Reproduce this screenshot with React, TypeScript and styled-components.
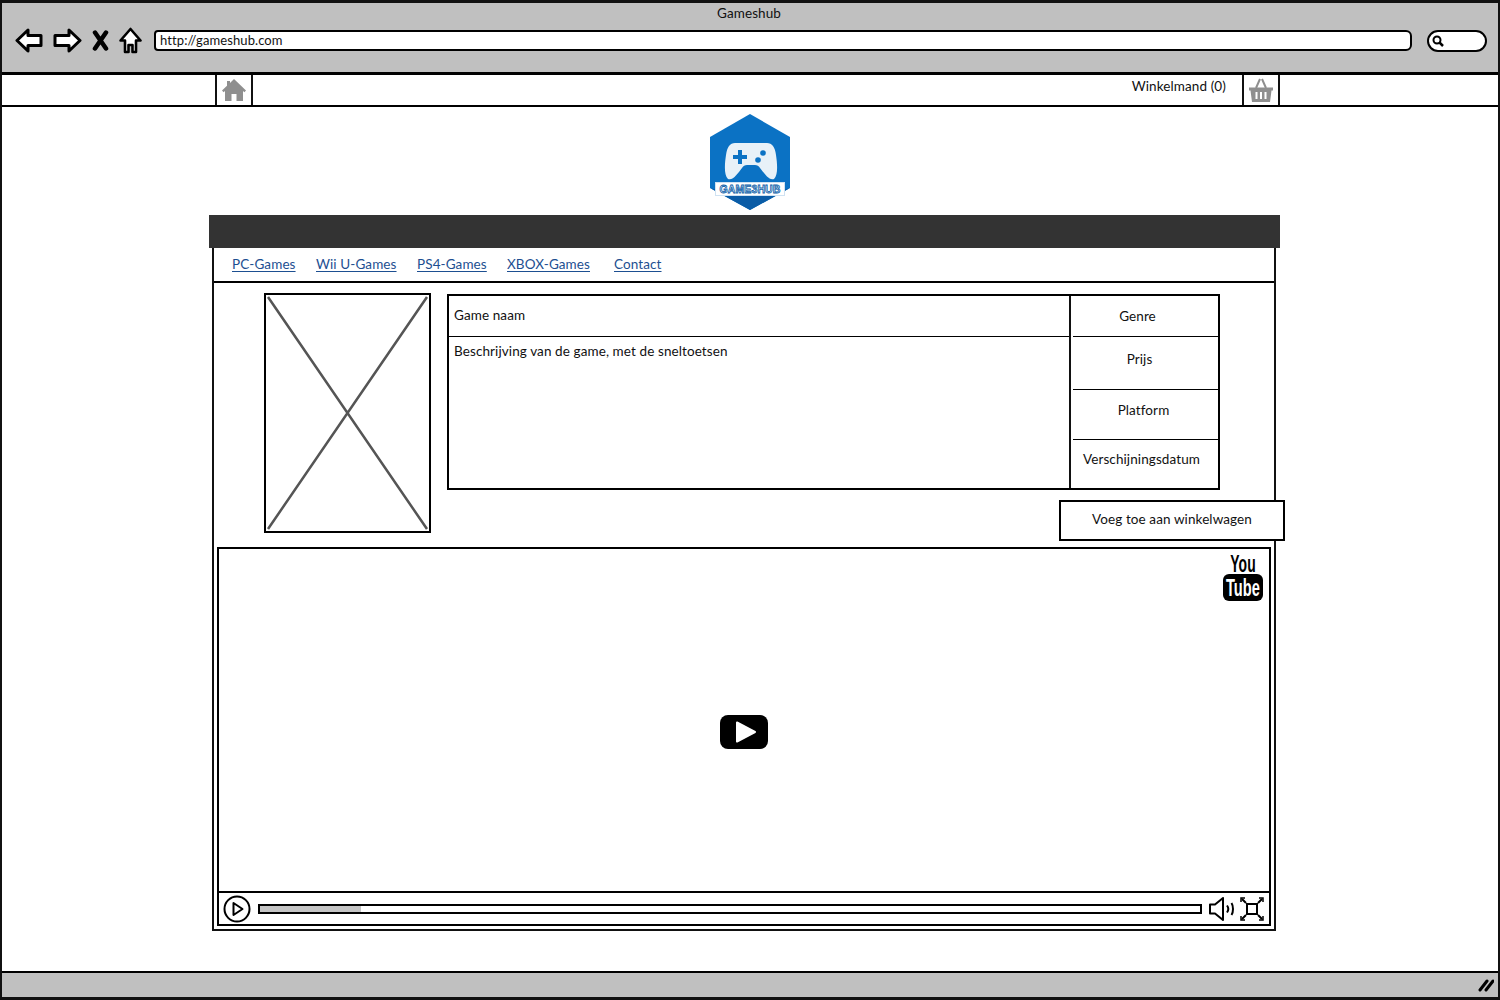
import styled, { createGlobalStyle } from "styled-components";

const GlobalStyle = createGlobalStyle`
  html, body {
    margin: 0;
    padding: 0;
    background: #fff;
  }
  body {
    font-family: Lato, "Open Sans", sans-serif;
    font-size: 13.5px;
    letter-spacing: 0.1px;
    color: #111;
  }
`;

const navLinks = ["PC-Games", "Wii U-Games", "PS4-Games", "XBOX-Games", "Contact"];

const specs = [
  { label: "Genre", shift: -8, top: 12 },
  { label: "Prijs", shift: -6, top: 14 },
  { label: "Platform", shift: -2, top: 12 },
  { label: "Verschijningsdatum", shift: -4, top: 11 },
];

const BackIcon = () => (
  <ToolIcon width="28" height="25" viewBox="0 0 28 25">
    <path d="M2 12.5 13 2v5.5h13v10H13V23z" fill="#fff" stroke="#000" strokeWidth="3" strokeLinejoin="round" />
  </ToolIcon>
);

const ForwardIcon = () => (
  <ToolIcon width="29" height="25" viewBox="0 0 29 25">
    <path d="M27 12.5 16 2v5.5H2v10h14V23z" fill="#fff" stroke="#000" strokeWidth="3" strokeLinejoin="round" />
  </ToolIcon>
);

const CloseIcon = () => (
  <ToolIcon width="17" height="21" viewBox="0 0 17 21">
    <path d="M3 2.5 14 18.5M14 2.5 3 18.5" fill="none" stroke="#000" strokeWidth="4.5" strokeLinecap="round" />
  </ToolIcon>
);

const HomeOutlineIcon = () => (
  <ToolIcon width="23" height="27" viewBox="0 0 23 27">
    <path d="M11.5 2 21.5 13.5H17V25H13.5V18H9.5V25H6V13.5H1.5z" fill="#fff" stroke="#000" strokeWidth="2.6" strokeLinejoin="round" />
  </ToolIcon>
);

const HomeSolidIcon = () => (
  <svg width="26" height="24" viewBox="0 0 26 24">
    <path d="M13 1 25 12.5l-1.6 1.7L22 13v10h-6.5v-7h-5v7H4V13l-1.4 1.2L1 12.5 6 7.700V3h3v2z" fill="#8f8f8f" />
  </svg>
);

const BasketIcon = () => (
  <svg width="24" height="26" viewBox="0 0 24 26">
    <path d="M7 11 11 2M17 11 13 2" fill="none" stroke="#8f8f8f" strokeWidth="2" />
    <path d="M0 10.500h24v3h-1.500L21 25H3L1.500 13.500H0z" fill="#8f8f8f" />
    <path d="M7.500 15v7M12 15v7M16.500 15v7" fill="none" stroke="#fff" strokeWidth="2" />
  </svg>
);

const Logo = () => (
  <svg width="82" height="97" viewBox="0 0 82 97">
    <path d="M41 1 81 24V75L41 97 1 75V24z" fill="#0b72c4" />
    <path d="M9 80H73V77L81 75 41 97 1 75 9 77z" fill="#0a5ca6" />
    <path
      d="M26 30H58C63 30 66 34 67 42 68.500 52 69 62 65 66 60 68 55 60 51 55 50 53 48 52 46 52H38C36 52 34 53 33 55 29 60 24 68 19 66 15 62 15.500 52 17 42 18 34 21 30 26 30z"
      fill="#e8f1f8"
    />
    <path d="M31 37V51M24 44H38" stroke="#0b72c4" strokeWidth="4" fill="none" />
    <circle cx="49" cy="47" r="2.800" fill="#0b72c4" />
    <circle cx="54" cy="40" r="2.800" fill="#0b72c4" />
    <rect x="6.500" y="69.500" width="69" height="13" fill="#fff" stroke="#cfe2f2" strokeWidth="1" />
    <text
      x="41"
      y="80"
      textAnchor="middle"
      fontFamily="'Liberation Sans', sans-serif"
      fontWeight="700"
      fontSize="10.500"
      fill="#e8f1f8"
      stroke="#0b5ea8"
      strokeWidth="0.800"
    >
      GAME3HUB
    </text>
  </svg>
);

const ImagePlaceholder = () => (
  <PlaceholderBox>
    <svg width="100%" height="100%" viewBox="0 0 162 236" preserveAspectRatio="none">
      <path d="M2 2 160 234M160 2 2 234" stroke="#555" strokeWidth="2.500" fill="none" />
    </svg>
  </PlaceholderBox>
);

const YoutubeBadge = () => (
  <YoutubeMark width="42" height="50" viewBox="0 0 42 50">
    <text
      textAnchor="middle"
      fontFamily="'Liberation Sans', sans-serif"
      fontWeight="700"
      fontSize="24"
      fill="#000"
      transform="translate(21 21) scale(0.58 1)"
    >
      You
    </text>
    <rect x="1" y="23" width="40" height="27" rx="6" fill="#000" />
    <text
      textAnchor="middle"
      fontFamily="'Liberation Sans', sans-serif"
      fontWeight="700"
      fontSize="24"
      fill="#fff"
      transform="translate(21 45) scale(0.61 1)"
    >
      Tube
    </text>
  </YoutubeMark>
);

const BigPlay = () => (
  <svg width="48" height="34" viewBox="0 0 48 34">
    <rect width="48" height="34" rx="8" fill="#000" />
    <path d="M17 7.500 35 17 17 26.500z" fill="#fff" stroke="#fff" strokeWidth="2" strokeLinejoin="round" />
  </svg>
);

const RoundPlay = () => (
  <svg width="28" height="28" viewBox="0 0 28 28">
    <circle cx="14" cy="14" r="12.500" fill="#fff" stroke="#000" strokeWidth="2" />
    <path d="M10.500 8 19.500 14 10.500 20z" fill="#fff" stroke="#000" strokeWidth="2" strokeLinejoin="round" />
  </svg>
);

const VolumeIcon = () => (
  <svg width="28" height="26" viewBox="0 0 28 26">
    <path d="M2 8.500H7L15 2V24L7 17.500H2z" fill="#fff" stroke="#000" strokeWidth="2" strokeLinejoin="round" />
    <path d="M19 9.500c1.500 2 1.500 5 0 7M23.500 7c2 3 2 9 0 12" fill="none" stroke="#000" strokeWidth="2" />
  </svg>
);

const FullscreenIcon = () => (
  <svg width="24" height="24" viewBox="0 0 24 24">
    <rect x="7" y="7" width="10" height="10" fill="#fff" stroke="#000" strokeWidth="2" />
    <path d="M6 6 2 2M18 6 22 2M6 18 2 22M18 18 22 22" stroke="#000" strokeWidth="2" fill="none" />
    <path d="M1 5V1H5M19 1H23V5M1 19V23H5M19 23H23V19" stroke="#000" strokeWidth="1.500" fill="none" />
  </svg>
);

export default function App() {
  return (
    <>
      <GlobalStyle />
      <Window>
        <Chrome>
          <ChromeTitle>Gameshub</ChromeTitle>
          <ChromeRow>
            <BackIcon />
            <ForwardIcon />
            <CloseIcon />
            <HomeOutlineIcon />
            <UrlField>http://gameshub.com</UrlField>
            <SearchPill>
              <svg width="12" height="12" viewBox="0 0 12 12">
                <circle cx="5" cy="5" r="3.500" fill="none" stroke="#000" strokeWidth="2" />
                <path d="M7.500 7.500 11 11" stroke="#000" strokeWidth="2.500" />
              </svg>
            </SearchPill>
          </ChromeRow>
        </Chrome>

        <TopBar>
          <IconTab>
            <HomeSolidIcon />
          </IconTab>
          <CartLabel>Winkelmand (0)</CartLabel>
          <IconTab>
            <BasketIcon />
          </IconTab>
        </TopBar>

        <Main>
          <LogoRow>
            <Logo />
          </LogoRow>
          <DarkBar />
          <Panel>
            <NavRow>
              {navLinks.map((link) => (
                <NavLink key={link} href="#">
                  {link}
                </NavLink>
              ))}
            </NavRow>
            <Details>
              <ImagePlaceholder />
              <DetailColumn>
                <InfoTable>
                  <InfoMain>
                    <GameName>Game naam</GameName>
                    <Description>Beschrijving van de game, met de sneltoetsen</Description>
                  </InfoMain>
                  <SpecColumn>
                    {specs.map((spec) => (
                      <SpecRow key={spec.label} $shift={spec.shift} $top={spec.top}>
                        {spec.label}
                      </SpecRow>
                    ))}
                  </SpecColumn>
                </InfoTable>
                <AddButton>Voeg toe aan winkelwagen</AddButton>
              </DetailColumn>
            </Details>
            <Video>
              <YoutubeBadge />
              <VideoStage>
                <BigPlay />
              </VideoStage>
              <VideoControls>
                <RoundPlay />
                <ProgressTrack>
                  <ProgressFill />
                </ProgressTrack>
                <VolumeIcon />
                <FullscreenIcon />
              </VideoControls>
            </Video>
          </Panel>
        </Main>

        <StatusBar>
          <svg width="16" height="14" viewBox="0 0 16 14">
            <path d="M2 12 9 3M8 12 15 3" stroke="#000" strokeWidth="3" strokeLinecap="round" />
          </svg>
        </StatusBar>
      </Window>
    </>
  );
}

const Window = styled.div`
  width: 1500px;
  height: 1000px;
  box-sizing: border-box;
  border: 2px solid #111;
  border-top-width: 3px;
  border-bottom-width: 3px;
  display: flex;
  flex-direction: column;
  overflow: hidden;
`;

const Chrome = styled.div`
  height: 69px;
  flex: none;
  background: #c0c0c0;
  border-bottom: 3px solid #000;
  display: flex;
  flex-direction: column;
  align-items: center;
`;

const ChromeTitle = styled.div`
  line-height: 14px;
  margin-top: 3px;
  margin-right: 2px;
`;

const ChromeRow = styled.div`
  width: 100%;
  box-sizing: border-box;
  display: flex;
  align-items: center;
  padding-left: 13px;
  margin-top: 7px;
`;

const ToolIcon = styled.svg`
  flex: none;
  margin-right: 10px;
`;

const UrlField = styled.div`
  width: 1258px;
  height: 21px;
  box-sizing: border-box;
  margin-left: 2px;
  padding-left: 4px;
  background: #fff;
  border: 2px solid #000;
  border-radius: 4px 6px 6px 4px;
  font-size: 13px;
  line-height: 17px;
`;

const SearchPill = styled.div`
  width: 60px;
  height: 22px;
  box-sizing: border-box;
  margin-left: 15px;
  padding-left: 3px;
  background: #fff;
  border: 2px solid #000;
  border-radius: 11px;
  display: flex;
  align-items: center;
`;

const TopBar = styled.div`
  height: 32px;
  flex: none;
  box-sizing: border-box;
  padding: 0 218px 0 213px;
  border-bottom: 2px solid #000;
  display: flex;
  align-items: stretch;
`;

const IconTab = styled.div`
  width: 38px;
  box-sizing: border-box;
  border-left: 2px solid #111;
  border-right: 2px solid #111;
  display: flex;
  align-items: center;
  justify-content: center;
`;

const CartLabel = styled.div`
  margin-left: auto;
  margin-right: 16px;
  line-height: 22px;
`;

const Main = styled.main`
  flex: 1;
  min-height: 0;
  padding-left: 207px;
  display: flex;
  flex-direction: column;
  align-items: flex-start;
`;

const LogoRow = styled.div`
  width: 1071px;
  height: 108px;
  flex: none;
  padding: 6px 0 0 11px;
  box-sizing: border-box;
  display: flex;
  justify-content: center;
`;

const DarkBar = styled.div`
  width: 1071px;
  height: 33px;
  flex: none;
  background: #333;
`;

const Panel = styled.section`
  width: 1064px;
  height: 683px;
  flex: none;
  box-sizing: border-box;
  margin-left: 3px;
  border: 2px solid #111;
  border-top: none;
  display: flex;
  flex-direction: column;
`;

const NavRow = styled.nav`
  height: 35px;
  flex: none;
  box-sizing: border-box;
  padding-left: 18px;
  border-bottom: 2px solid #000;
  display: grid;
  grid-template-columns: 84px 101px 90px 107px auto;
  align-items: start;
`;

const NavLink = styled.a`
  color: #1d4f91;
  line-height: 16px;
  margin-top: 8px;
  justify-self: start;
  text-underline-offset: 2px;
`;

const Details = styled.div`
  height: 264px;
  flex: none;
  box-sizing: border-box;
  padding: 10px 0 0 50px;
  display: flex;
  align-items: flex-start;
  gap: 16px;
`;

const PlaceholderBox = styled.div`
  width: 167px;
  height: 240px;
  flex: none;
  box-sizing: border-box;
  border: 2px solid #000;

  svg {
    display: block;
  }
`;

const DetailColumn = styled.div`
  display: flex;
  flex-direction: column;
  align-items: flex-end;
  gap: 10px;
`;

const InfoTable = styled.div`
  width: 773px;
  height: 196px;
  box-sizing: border-box;
  margin-top: 1px;
  border: 2px solid #000;
  display: flex;
`;

const InfoMain = styled.div`
  flex: 1;
  display: flex;
  flex-direction: column;
`;

const GameName = styled.div`
  height: 41px;
  box-sizing: border-box;
  padding: 11px 0 0 5px;
  line-height: 16px;
  border-bottom: 1.500px solid #000;
`;

const Description = styled.div`
  padding: 6px 0 0 5px;
  line-height: 16px;
`;

const SpecColumn = styled.div`
  width: 149px;
  flex: none;
  box-sizing: border-box;
  border-left: 2px solid #111;
  display: grid;
  grid-template-rows: 41px 53px 50px 1fr;
`;

const SpecRow = styled.div<{ $shift: number; $top: number }>`
  box-sizing: border-box;
  padding-top: ${({ $top }) => $top}px;
  padding-right: ${({ $shift }) => -$shift * 2}px;
  text-align: center;
  line-height: 16px;
  border-bottom: 1.500px solid #000;
  margin-left: 2px;

  &:last-child {
    border-bottom: none;
  }
`;

const AddButton = styled.button`
  width: 226px;
  height: 41px;
  box-sizing: border-box;
  margin-right: -65px;
  position: relative;
  background: #fff;
  border: 2px solid #000;
  font: inherit;
  letter-spacing: inherit;
  color: inherit;
  padding: 0 0 4px;
`;

const Video = styled.div`
  position: relative;
  flex: 1;
  margin: 0 3px 3px 3px;
  border: 2px solid #000;
  display: flex;
  flex-direction: column;
  min-height: 0;
`;

const YoutubeMark = styled.svg`
  position: absolute;
  top: 2px;
  right: 5px;
`;

const VideoStage = styled.div`
  flex: 1;
  display: flex;
  align-items: center;
  justify-content: center;
  padding: 24px 1px 0 0;
`;

const VideoControls = styled.div`
  height: 33px;
  flex: none;
  box-sizing: border-box;
  padding: 0 5px 0 4px;
  border-top: 2px solid #000;
  display: flex;
  align-items: center;
  gap: 4px;
`;

const ProgressTrack = styled.div`
  flex: 1;
  height: 10px;
  box-sizing: border-box;
  margin: 0 2px 0 3px;
  border: 2px solid #000;
  background: #fff;
`;

const ProgressFill = styled.div`
  width: 101px;
  height: 100%;
  background: #c4c4c4;
`;

const StatusBar = styled.footer`
  height: 26px;
  flex: none;
  box-sizing: border-box;
  margin-top: auto;
  padding-right: 4px;
  background: #c0c0c0;
  border-top: 2px solid #000;
  display: flex;
  align-items: center;
  justify-content: flex-end;
`;
